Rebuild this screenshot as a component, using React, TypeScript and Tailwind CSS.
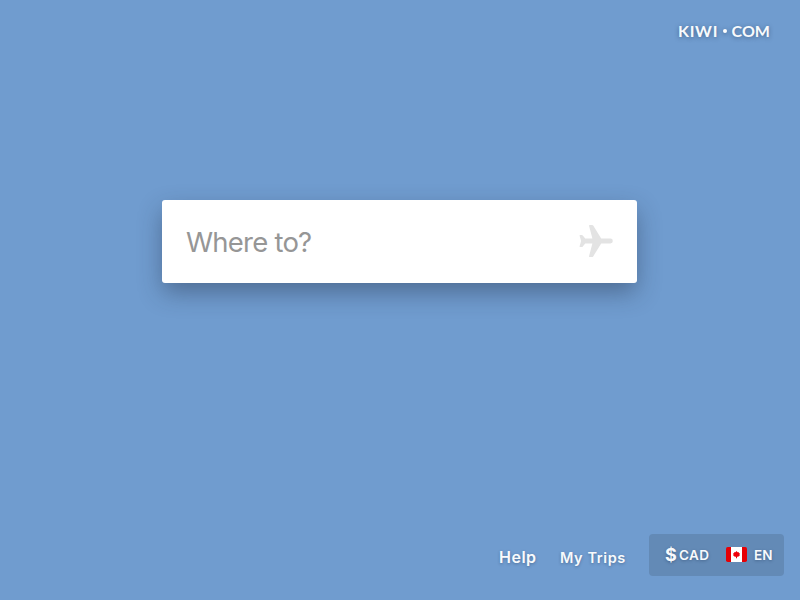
import React from "react";

function Plane() {
  return (
    <svg className="mb-[2px] h-[34px] w-[34px]" viewBox="0 0 34 34" fill="#e3e3e3">
      <path d="M10.8 1H13.1Q13.8 1 14.2 1.6L22.2 14.6H31.4A2.4 2.4 0 0 1 31.4 19.4H22.2L14.2 32.4Q13.8 33 13.1 33H10.8Q9.8 33 10.1 32L13.4 19.4H6.2L3.8 22.5Q3.4 23 2.8 23H1.2Q.4 23 .6 22.2L2.1 17L.6 11.8Q.4 11 1.2 11H2.8Q3.4 11 3.8 11.5L6.2 14.6H13.4L10.1 2Q9.8 1 10.8 1Z" />
    </svg>
  );
}

function CanadaFlag() {
  return (
    <svg className="mb-px h-[15px] w-[21px]" viewBox="0 0 21 15">
      <rect width="21" height="15" rx="1.8" fill="#e60005" />
      <path d="M5 0H16V15H5Z" fill="#fff" />
      <path d="M10.5 4L11.6 5.2L12.8 4.9L12.7 6.1L14 6.4L13.5 7.8L13.8 8.6L12.1 9.8L11 9.7V11.3H10V9.7L8.9 9.8L7.2 8.6L7.5 7.8L7 6.4L8.3 6.1L8.2 4.9L9.4 5.2Z" fill="#f00009" />
    </svg>
  );
}

export default function App() {
  return (
    <div className="flex h-[600px] w-[800px] flex-col overflow-hidden bg-[#709ccf] font-['Inter',sans-serif] font-semibold text-[#f8fafc]">
      <header className="flex h-[200px] justify-end pt-[21px] pr-[30px] font-['Lato',sans-serif] font-bold">
        <div className="flex h-5 w-[92px] items-center justify-between text-[16px] leading-5 whitespace-nowrap [text-shadow:0_1px_4px_rgba(30,50,80,0.5)]">
          <span className="tracking-[0.7px]">KIWI</span>
          <span className="h-1 w-1 rounded-full bg-white shadow-[0_1px_4px_rgba(30,50,80,0.5)]" />
          <span>COM</span>
        </div>
      </header>
      <main className="ml-[162px] flex h-[83px] w-[475px] items-center justify-between rounded-[3px] bg-white pr-[24px] pl-[24px] shadow-[0_10px_24px_-1px_rgba(38,50,75,0.46)]">
        <span className="text-[27.5px] leading-8 font-normal tracking-[-0.77px] text-[#969696]">Where to?</span>
        <Plane />
      </main>
      <footer className="mt-auto flex h-[66px] items-start justify-end pr-4 [text-shadow:0_1px_3px_rgba(30,50,80,0.4)]">
        <a className="mt-[11px] w-[61px] text-[16px] leading-6 tracking-[0.5px]">Help</a>
        <a className="mt-[12px] w-[89px] text-[14.5px] leading-6 tracking-[0.6px] whitespace-nowrap">My Trips</a>
        <div className="flex h-[42px] w-[135px] items-center rounded-[4px] bg-[#638ab6] pl-4 text-[13.5px] leading-5">
          <span className="w-[14px] text-[18px] font-bold">$</span>
          <span className="w-[47px] tracking-[0.4px]">CAD</span>
          <CanadaFlag />
          <span className="ml-[7px]">EN</span>
        </div>
      </footer>
    </div>
  );
}
